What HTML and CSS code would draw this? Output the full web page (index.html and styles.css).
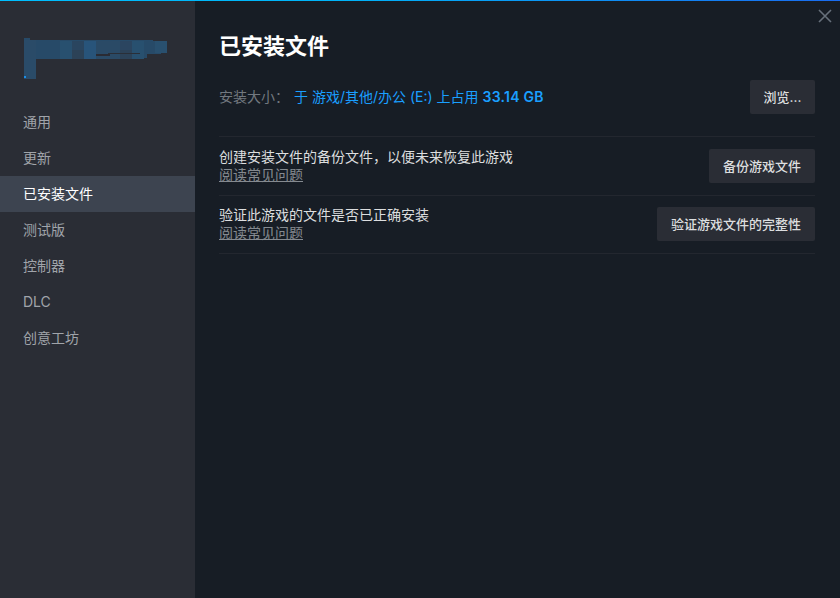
FILE: index.html
```html
<!DOCTYPE html>
<html lang="zh-CN">
<head>
<meta charset="utf-8">
<title>已安装文件</title>
<link rel="stylesheet" href="styles.css">
</head>
<body>
<div class="window">
  <div class="accent"></div>
  <div class="columns">
    <aside class="sidebar">
      <div class="logo">
        <svg width="145" height="41" viewBox="0 0 145 41" shape-rendering="crispEdges">
          <path fill="#274a68" d="M0 0h6v2h108v0h15v1h14v12h-6v1h-14v4h-12v1H12v19H0z"/>
          <rect x="0" y="2" width="12" height="39" fill="#2a4b68"/>
          <rect x="36" y="3" width="12" height="18" fill="#28506f"/>
          <rect x="48" y="3" width="12" height="9" fill="#2a455f"/>
          <rect x="48" y="12" width="12" height="9" fill="#2c4257"/>
          <rect x="60" y="3" width="12" height="18" fill="#28547a"/>
          <rect x="72" y="3" width="24" height="18" fill="#2a4a66"/>
          <rect x="96" y="3" width="12" height="9" fill="#2b4560"/>
          <rect x="96" y="12" width="12" height="9" fill="#2c4258"/>
          <rect x="108" y="3" width="12" height="18" fill="#28506f"/>
          <rect x="131" y="3" width="12" height="12" fill="#29506f"/>
          <rect x="72" y="16" width="14" height="2" fill="#2a2b33"/>
          <rect x="84" y="15" width="32" height="1" fill="#2a2f38"/>
          <rect x="0" y="38" width="2" height="2" fill="#1a8ee8"/>
        </svg>
      </div>
      <nav class="nav">
        <a class="nav-item">通用</a>
        <a class="nav-item">更新</a>
        <a class="nav-item active">已安装文件</a>
        <a class="nav-item">测试版</a>
        <a class="nav-item">控制器</a>
        <a class="nav-item">DLC</a>
        <a class="nav-item">创意工坊</a>
      </nav>
    </aside>
    <main class="content">
      <button class="close" aria-label="关闭">
        <svg width="14" height="14" viewBox="0 0 14 14"><path d="M1 1l12 12M13 1L1 13" stroke="#67707b" stroke-width="1.6" fill="none"/></svg>
      </button>
      <h1 class="title">已安装文件</h1>
      <div class="size-row">
        <div class="size-text">
          <span class="size-label">安装大小：</span>
          <span class="size-value">于 游戏/其他/办公 (E:) 上占用 <b class="size-num">33.14 GB</b></span>
        </div>
        <button class="btn btn-browse">浏览...</button>
      </div>
      <section class="row">
        <div class="row-text">
          <div class="row-label">创建安装文件的备份文件，以便未来恢复此游戏</div>
          <a class="faq">阅读常见问题</a>
        </div>
        <button class="btn">备份游戏文件</button>
      </section>
      <section class="row row-last">
        <div class="row-text">
          <div class="row-label">验证此游戏的文件是否已正确安装</div>
          <a class="faq">阅读常见问题</a>
        </div>
        <button class="btn">验证游戏文件的完整性</button>
      </section>
    </main>
  </div>
</div>
</body>
</html>
```

FILE: styles.css
```css
* { box-sizing: border-box; }
html, body { margin: 0; padding: 0; height: 100%; }
body {
  background: #171d25;
  font-family: "Inter", "Noto Sans CJK SC", sans-serif;
  font-size: 14px;
  overflow: hidden;
}
.window { width: 840px; height: 598px; display: flex; flex-direction: column; }
.accent { height: 1px; flex: none; background: linear-gradient(90deg, #00bfff 0%, #00b4f8 40%, #1a6cf0 100%); }
.columns { flex: 1; display: flex; min-height: 0; }
.sidebar { width: 195px; flex: none; background: #2a2d35; display: flex; flex-direction: column; }
.logo { height: 103px; padding: 37px 0 0 24px; }
.logo svg { display: block; }
.nav { display: flex; flex-direction: column; }
.nav-item {
  height: 36px;
  padding-left: 23px;
  display: flex;
  align-items: center;
  color: #a0a4aa;
  line-height: 20px;
}
.nav-item.active { background: #3d4450; color: #ffffff; }
.content { flex: 1; position: relative; padding: 0 25px 0 24px; min-width: 0; }
.close {
  position: absolute;
  top: 8px;
  right: 8px;
  width: 14px;
  height: 14px;
  padding: 0;
  border: 0;
  background: none;
  display: block;
}
.close svg { display: block; }
.title {
  margin: 0;
  padding-top: 28px;
  height: 79px;
  font-size: 22px;
  line-height: 34px;
  font-weight: 700;
  color: #ffffff;
}
.size-row {
  display: flex;
  align-items: center;
  justify-content: space-between;
  height: 56px;
  padding-bottom: 22px;
}
.size-text { display: flex; padding-bottom: 2px; }
.size-label { width: 75px; color: #72787f; }
.size-value { color: #1a9fff; }
.size-num { font-weight: 600; letter-spacing: 0.25px; }
.row {
  display: flex;
  align-items: center;
  justify-content: space-between;
  height: 59px;
  border-top: 1px solid #23272f;
}
.row-last { border-bottom: 1px solid #23272f; padding-bottom: 1px; }
.row-text { display: flex; flex-direction: column; }
.row-label { color: #dcdedf; line-height: 18px; }
.faq { color: #858a90; line-height: 18px; text-decoration: underline; }
.btn {
  height: 34px;
  padding: 0 14px 2px;
  border: 0;
  border-radius: 2px;
  background: #2a2d35;
  color: #dcdedf;
  font: inherit;
  font-size: 13px;
  font-weight: 500;
}
.btn-browse { width: 65px; padding: 0 0 2px; }
```
